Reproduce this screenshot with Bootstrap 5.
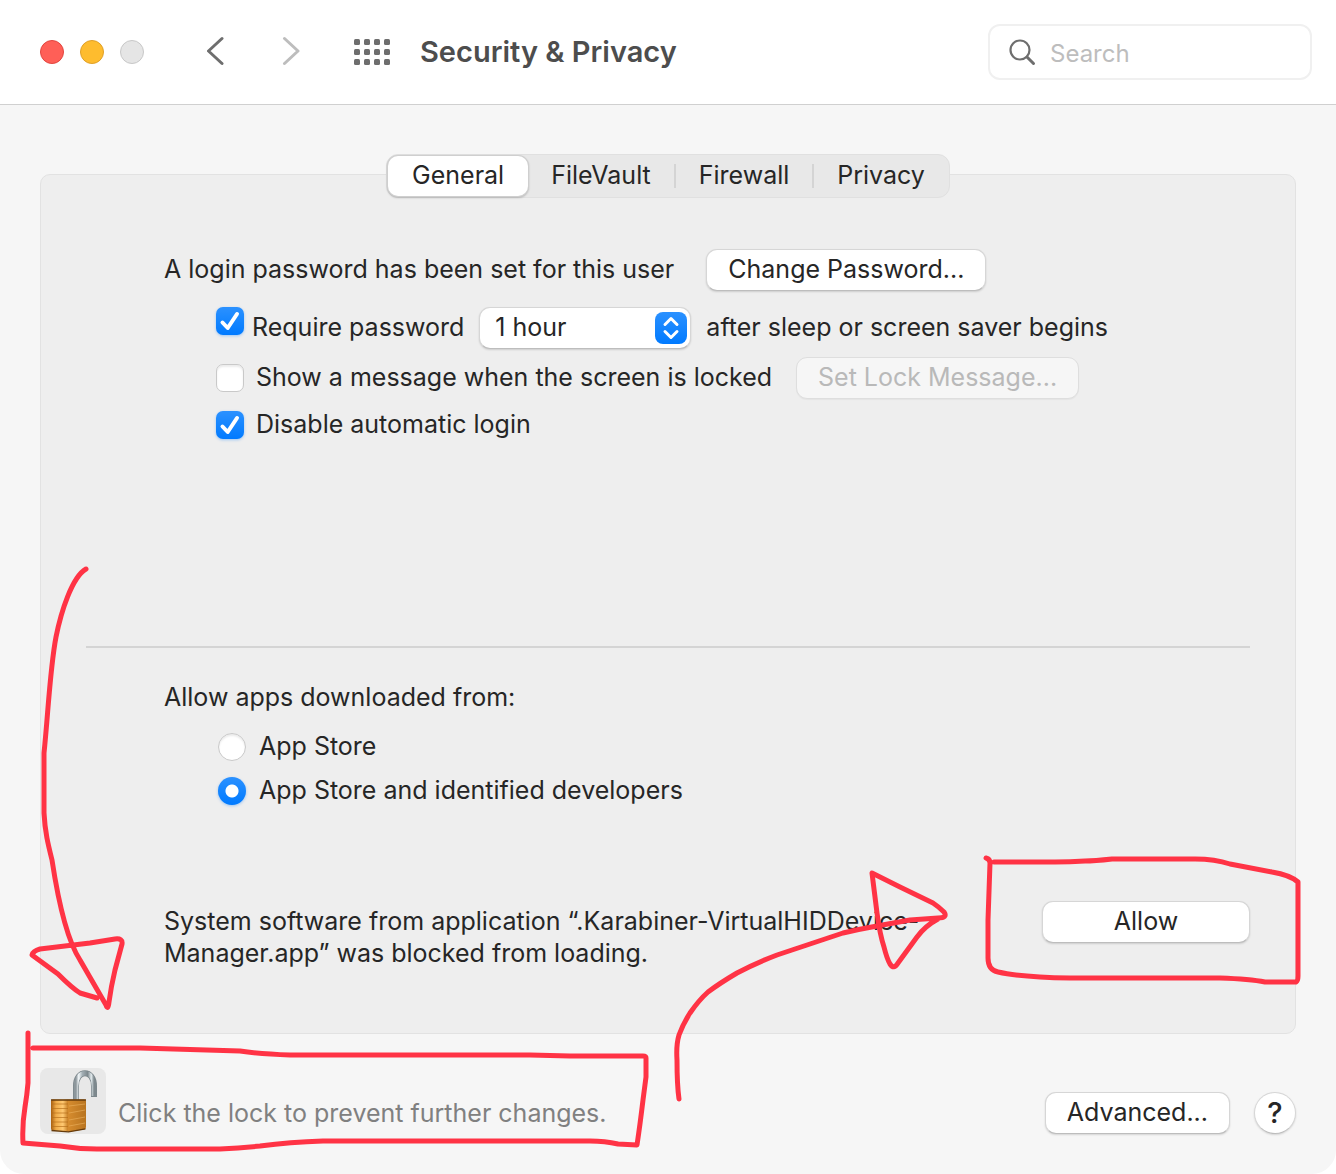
<!DOCTYPE html>
<html lang="en">
<head>
<meta charset="utf-8">
<meta name="viewport" content="width=device-width, initial-scale=1">
<title>Security &amp; Privacy</title>
<link href="https://cdn.jsdelivr.net/npm/bootstrap@5.3.0/dist/css/bootstrap.min.css" rel="stylesheet">
<style>
  body { font-family: Inter, "Liberation Sans", sans-serif; font-size: 25px; line-height: 32px; color: #262626; background: #fff; }
  .pref-window { position: relative; min-height: 100vh; background: #f6f6f6; border-radius: 0 0 24px 24px; overflow: hidden; }
  .title-bar { height: 105px; padding: 0 24px 0 40px; background: #fff; border-bottom: 1px solid #d0d0d0; }
  .title-bar h1 { margin: 0 0 0 29px; font-size: 29px; font-weight: 600; line-height: 40px; color: #4d4d4d; }
  .light { width: 24px; height: 24px; padding: 0; border-radius: 50%; border: 1px solid; }
  .light-close { background: #ff5f57; border-color: #e2463f; }
  .light-min { background: #febc2e; border-color: #e0a028; }
  .light-off { background: #e5e5e5; border-color: #c8c8c8; }
  .bar-tools { gap: 53px; margin-left: 63px; }
  .bar-btn { padding: 0; border: 0; background: none; line-height: 0; }
  .search-box { width: 324px; height: 56px; padding: 0 18px; gap: 12px; border: 2px solid #f0f0f0; border-radius: 12px; }
  .search-box input { min-width: 0; flex: 1; border: 0; outline: 0; padding: 3px 0 0; background: none; font-size: 24px; }
  .search-box input::placeholder { color: #bdbdbd; opacity: 1; }
  main { padding: 49px 40px 40px; }
  .seg { height: 44px; margin-bottom: -24px; padding: 1px; border: 1px solid #e0e0e0; border-radius: 12px; background: #e8e8e8; position: relative; }
  .seg button { height: 40px; padding: 0 23px 2px; border: 0; border-radius: 10px; background: none; color: #262626; line-height: 38px; }
  .seg .active { padding: 0 24px 2px; background: #fff; box-shadow: 0 0 0 1px #cfcfcf, 0 1px 2px 1px rgba(0,0,0,.2); }
  .seg-line { width: 2px; height: 24px; background: #d4d4d4; }
  .pane { padding: 74px 45px 64px; border: 1px solid #e2e2e2; border-radius: 10px; background: #eee; }
  .pane-body { padding-left: 78px; }
  .indent { padding-left: 52px; }
  .login-row { gap: 32px; }
  .login-row span, .opt label, .opt span { padding-bottom: 2px; }
  .mac-btn { height: 42px; padding: 0 21px 2px; border: 1px solid #d6d6d6; border-bottom-color: #bdbdbd; border-radius: 11px; background: #fff; color: #262626; line-height: 36px; box-shadow: 0 1px 2px rgba(0,0,0,.14); }
  .mac-btn:disabled { background: #f6f6f6; color: #b9b9b9; border-color: #dedede; box-shadow: 0 1px 1px rgba(0,0,0,.04); }
  .opt { min-height: 42px; gap: 12px; }
  .delay-row { gap: 15px; }
  .lock-row button { margin-left: 12px; }
  .auto-row { min-height: 36px; }
  .opt .form-check-input { flex: none; width: 28px; height: 28px; margin: 0; border: 1px solid #c9c9c9; background-color: #fff; box-shadow: inset 0 2px 2px rgba(0,0,0,.08); }
  .opt .form-check-input[type=checkbox] { border-radius: 7px; }
  .opt .form-check-input:checked { border: 0; background-color: #0a7bff; background-size: 100% 100%; box-shadow: 0 1px 3px rgba(0,122,255,.35); }
  .opt .form-check-input[type=checkbox]:checked { background-image: url("data:image/svg+xml,%3Csvg xmlns='http://www.w3.org/2000/svg' viewBox='0 0 28 28'%3E%3Cpath d='M6.500 15.500 11.700 21 21 7' fill='none' stroke='white' stroke-width='4' stroke-linecap='round' stroke-linejoin='round'/%3E%3C/svg%3E"), linear-gradient(#2b91ff, #007aff); }
  .opt .form-check-input[type=radio]:checked { background-image: radial-gradient(circle, #fff 6px, transparent 7px), linear-gradient(#2b91ff, #007aff); }
  .delay { width: 212px; height: 42px; padding: 0 44px 2px 15px; border: 1px solid #d6d6d6; border-bottom-color: #bdbdbd; border-radius: 11px; color: #262626; appearance: none; box-shadow: 0 1px 2px rgba(0,0,0,.14);
    background: #fff url("data:image/svg+xml,%3Csvg xmlns='http://www.w3.org/2000/svg' width='32' height='32'%3E%3Cdefs%3E%3ClinearGradient id='g' x2='0' y2='1'%3E%3Cstop stop-color='%232b91ff'/%3E%3Cstop offset='1' stop-color='%23007aff'/%3E%3C/linearGradient%3E%3C/defs%3E%3Crect width='32' height='32' rx='8' fill='url(%23g)'/%3E%3Cpath d='m10 12.500 6-6 6 6M10 19.500l6 6 6-6' fill='none' stroke='white' stroke-width='3' stroke-linecap='round' stroke-linejoin='round'/%3E%3C/svg%3E") no-repeat right 3px center; }
  .rule { height: 2px; margin: 203px 0 33px; border: 0; opacity: 1; background: #d4d4d4; }
  .sources { padding-top: 12px; padding-left: 54px; }
  .radio-row { min-height: 44px; gap: 13px; }
  .blocked { margin-top: 88px; gap: 60px; }
  .blocked p { max-width: 800px; padding-top: 4px; margin: 0; }
  .allow-btn { width: 208px; flex: none; }
  .foot { padding-top: 34px; }
  .lock-btn { width: 66px; height: 66px; padding: 0; border: 0; border-radius: 8px; background: #e8e8e8; line-height: 0; }
  .lock-note { color: #808080; padding-bottom: 5px; }
  .help-btn { width: 42px; padding: 0; border-radius: 50%; font-size: 29px; font-weight: 500; }
  .markup { position: absolute; left: 0; top: 0; width: 100%; pointer-events: none; }
</style>
</head>
<body>
<div class="pref-window">
  <header class="title-bar d-flex align-items-center">
    <div class="d-flex gap-3">
      <button class="light light-close" aria-label="Close"></button>
      <button class="light light-min" aria-label="Minimize"></button>
      <button class="light light-off" aria-label="Zoom" disabled></button>
    </div>
    <div class="bar-tools d-flex align-items-center">
      <button class="bar-btn" aria-label="Back"><svg width="20" height="32" viewBox="0 0 20 32" fill="none" stroke="#6e6e6e" stroke-width="3" stroke-linecap="round" stroke-linejoin="round"><path d="M15 2.500 1.500 15 15 27.500"/></svg></button>
      <button class="bar-btn" aria-label="Forward"><svg width="20" height="32" viewBox="0 0 20 32" fill="none" stroke="#bdbdbd" stroke-width="3" stroke-linecap="round" stroke-linejoin="round"><path d="M4.500 2.500 18 15 4.500 27.500"/></svg></button>
      <button class="bar-btn" aria-label="Show all"><svg width="38" height="28" viewBox="0 0 38 28" fill="#6e6e6e"><g id="dots"><rect x="1" y="1" width="6" height="6" rx="1.500"/><rect x="11" y="1" width="6" height="6" rx="1.500"/><rect x="21" y="1" width="6" height="6" rx="1.500"/><rect x="31" y="1" width="6" height="6" rx="1.500"/></g><use href="#dots" y="10"/><use href="#dots" y="20"/></svg></button>
    </div>
    <h1>Security &amp; Privacy</h1>
    <label class="search-box d-flex align-items-center ms-auto">
      <svg width="30" height="30" viewBox="0 0 30 30" fill="none" stroke="#6e6e6e" stroke-linecap="round" aria-hidden="true"><circle cx="12" cy="13" r="9.500" stroke-width="2.200"/><path d="m19 20 6.500 6.500" stroke-width="3"/></svg>
      <input type="search" placeholder="Search" aria-label="Search">
    </label>
  </header>

  <main class="d-flex flex-column">
    <div class="seg d-flex align-items-center align-self-center" role="tablist">
      <button class="active" role="tab" aria-selected="true">General</button>
      <button role="tab">FileVault</button><span class="seg-line"></span>
      <button role="tab">Firewall</button><span class="seg-line"></span>
      <button role="tab">Privacy</button>
    </div>
    <section class="pane">
      <div class="pane-body">
        <div class="login-row d-flex align-items-center mb-3">
          <span>A login password has been set for this user</span>
          <button class="mac-btn">Change Password...</button>
        </div>
        <div class="indent d-flex flex-column gap-2">
          <div class="opt delay-row d-flex align-items-center">
            <div class="d-flex align-items-center gap-2 align-self-stretch">
              <input class="form-check-input align-self-start" type="checkbox" id="require" checked>
              <label for="require">Require password</label>
            </div>
            <select class="delay" aria-label="Delay"><option>1 hour</option></select>
            <span>after sleep or screen saver begins</span>
          </div>
          <div class="opt lock-row d-flex align-items-center">
            <input class="form-check-input" type="checkbox" id="message">
            <label for="message">Show a message when the screen is locked</label>
            <button class="mac-btn" disabled>Set Lock Message...</button>
          </div>
          <div class="opt auto-row d-flex align-items-center">
            <input class="form-check-input" type="checkbox" id="autologin" checked>
            <label for="autologin">Disable automatic login</label>
          </div>
        </div>
      </div>
      <hr class="rule">
      <div class="pane-body">
        <div>Allow apps downloaded from:</div>
        <div class="sources">
          <div class="opt radio-row d-flex align-items-center">
            <input class="form-check-input" type="radio" name="source" id="store">
            <label for="store">App Store</label>
          </div>
          <div class="opt radio-row d-flex align-items-center">
            <input class="form-check-input" type="radio" name="source" id="developers" checked>
            <label for="developers">App Store and identified developers</label>
          </div>
        </div>
        <div class="blocked d-flex align-items-start justify-content-between">
          <p>System software from application “.Karabiner-VirtualHIDDevice-Manager.app” was blocked from loading.</p>
          <button class="mac-btn allow-btn">Allow</button>
        </div>
      </div>
    </section>
    <footer class="foot d-flex align-items-end">
      <button class="lock-btn" aria-label="Lock"><svg width="66" height="66" viewBox="0 0 66 66">
        <defs>
          <linearGradient id="steel" x1="0" x2="1"><stop stop-color="#8d979c"/><stop offset=".15" stop-color="#f4f9fb"/><stop offset=".35" stop-color="#a3afb5"/><stop offset=".65" stop-color="#7d888d"/><stop offset=".85" stop-color="#e3ebee"/><stop offset="1" stop-color="#7d888d"/></linearGradient>
          <linearGradient id="brassL" x1="0" x2="1"><stop stop-color="#a85f10"/><stop offset=".3" stop-color="#f0ab48"/><stop offset=".7" stop-color="#ffc972"/><stop offset="1" stop-color="#c87f24"/></linearGradient>
          <linearGradient id="brassR" x1="0" x2="1"><stop stop-color="#d68c2e"/><stop offset="1" stop-color="#b87420"/></linearGradient>
        </defs>
        <path d="M36 33V18C36 1 54 1 54 18V29" fill="none" stroke="#7b868b" stroke-width="6"/>
        <path d="M36 33V18C36 1 54 1 54 18V28" fill="none" stroke="url(#steel)" stroke-width="4.500"/>
        <path d="M11 33q0-1.500 2-1.500h15v32l-15-1q-2 0-2-2z" fill="url(#brassL)"/>
        <path d="M28 31.500h16q2 0 2 1.500v26q0 2-2 2.500l-16 2.500z" fill="url(#brassR)"/>
        <path d="M11 36h17M11 40.500h17M11 45h17M11 49.500h17M11 54h17M11 58.500h17" stroke="#b56d18" stroke-width="1.200" opacity=".65"/>
        <path d="m29 38 16-2M29 45l16-3M29 52l16-3M29 58l16-3" stroke="#edb35f" stroke-width="1" opacity=".6"/>
        <path d="M11 32h35M11.500 62.500l17 1.300 17-3" fill="none" stroke="#663b0b" stroke-width="1.300"/>
      </svg></button>
      <span class="lock-note ms-2 ps-1">Click the lock to prevent further changes.</span>
      <button class="mac-btn ms-auto">Advanced...</button>
      <button class="mac-btn help-btn ms-4" aria-label="Help">?</button>
    </footer>
  </main>

  <svg class="markup" viewBox="0 0 1336 1174" fill="none" stroke="#ff3345" stroke-width="5" stroke-linecap="round" stroke-linejoin="round" aria-hidden="true">
    <path d="M86 569C72 577 61 612 56 637 50 668 48 715 44 753V813C45 832 48 844 52 860 57 893 65 937 80 960L106 1005Q108 1011 109 1002 111 987 115 970L122 944Q123 938 115 939L90 943 40 949Q33 951 32 955L58 974Q72 988 80 993L97 998"/>
    <path d="M28 1033V1083Q27 1095 25 1107 22 1125 23 1143L60 1146Q78 1149 97 1149H220Q240 1148 260 1146 290 1142 323 1141H590Q605 1141 618 1144L637 1145Q640 1125 643 1100L646 1077V1058Q646 1056 643 1056H570L530 1055H290Q260 1054 240 1051L140 1048H33"/>
    <path d="M679 1099Q677 1085 677 1060 676 1045 679 1035 683 1024 690 1013 699 1000 708 992 720 983 737 973 756 963 777 955L810 944 843 933Q860 929 877 926L910 920 938 918Q948 918 944 912 939 907 933 903L900 887 872 873 877 913Q880 935 884 947 887 959 890 964 894 970 898 963L917 937Q925 926 938 919"/>
    <path d="M986 858Q990 859 990 863L988 920V958Q988 970 998 972 1020 977 1070 978H1220Q1250 979 1265 982H1296Q1298 981 1298 976V882Q1290 875 1272 872L1230 864Q1215 859 1195 859H1112Q1094 861 1085 861 1070 862 1055 862H994"/>
  </svg>
</div>
<script src="https://cdn.jsdelivr.net/npm/bootstrap@5.3.0/dist/js/bootstrap.bundle.min.js"></script>
</body>
</html>
